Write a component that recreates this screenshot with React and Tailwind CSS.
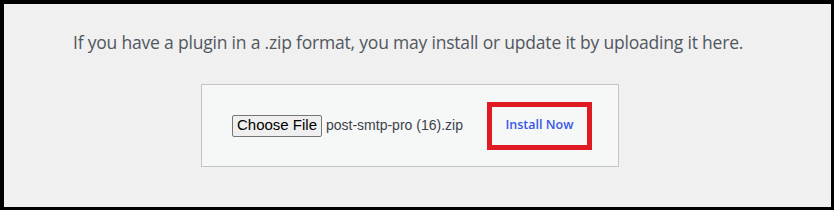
export default function App() {
  return (
    <div className="h-[210px] w-[834px] overflow-hidden bg-black pt-[4px] pl-[4px] pr-[3px] pb-[3px]">
      <div className="flex h-full w-full flex-col bg-[#f0f0f1]">
        <p
          className="mt-[27px] pl-[69px] text-[17.5px] leading-[23px] tracking-[-0.2px] text-[#50575e] whitespace-nowrap"
          style={{ fontFamily: '"Open Sans", "Noto Sans", sans-serif' }}
        >
          If you have a plugin in a .zip format, you may install or update it by uploading it here.
        </p>

        <div className="ml-[197px] mt-[30px] flex h-[83px] w-[418px] items-center border border-[#c3c4c7] bg-[#f6f7f7] pl-[30px]">
          <div
            className="flex items-center text-[#3c434a]"
            style={{ fontFamily: '"Liberation Sans", Arial, sans-serif' }}
          >
            <span className="flex h-[22px] w-[90px] items-center justify-center rounded-[2px] border border-[#767676] bg-[#efefef] text-[15px] text-black">
              Choose File
            </span>
            <span className="ml-[4px] text-[14px] text-[#3c434a]">post-smtp-pro (16).zip</span>
          </div>
          <div className="ml-[24px] flex h-[48px] w-[105px] items-center justify-center border-[5px] border-[#e01b24]">
            <span
              className="text-[12.5px] font-semibold text-[#3858e9]"
              style={{ fontFamily: '"Open Sans", "Noto Sans", sans-serif' }}
            >
              Install Now
            </span>
          </div>
        </div>
      </div>
    </div>
  );
}
